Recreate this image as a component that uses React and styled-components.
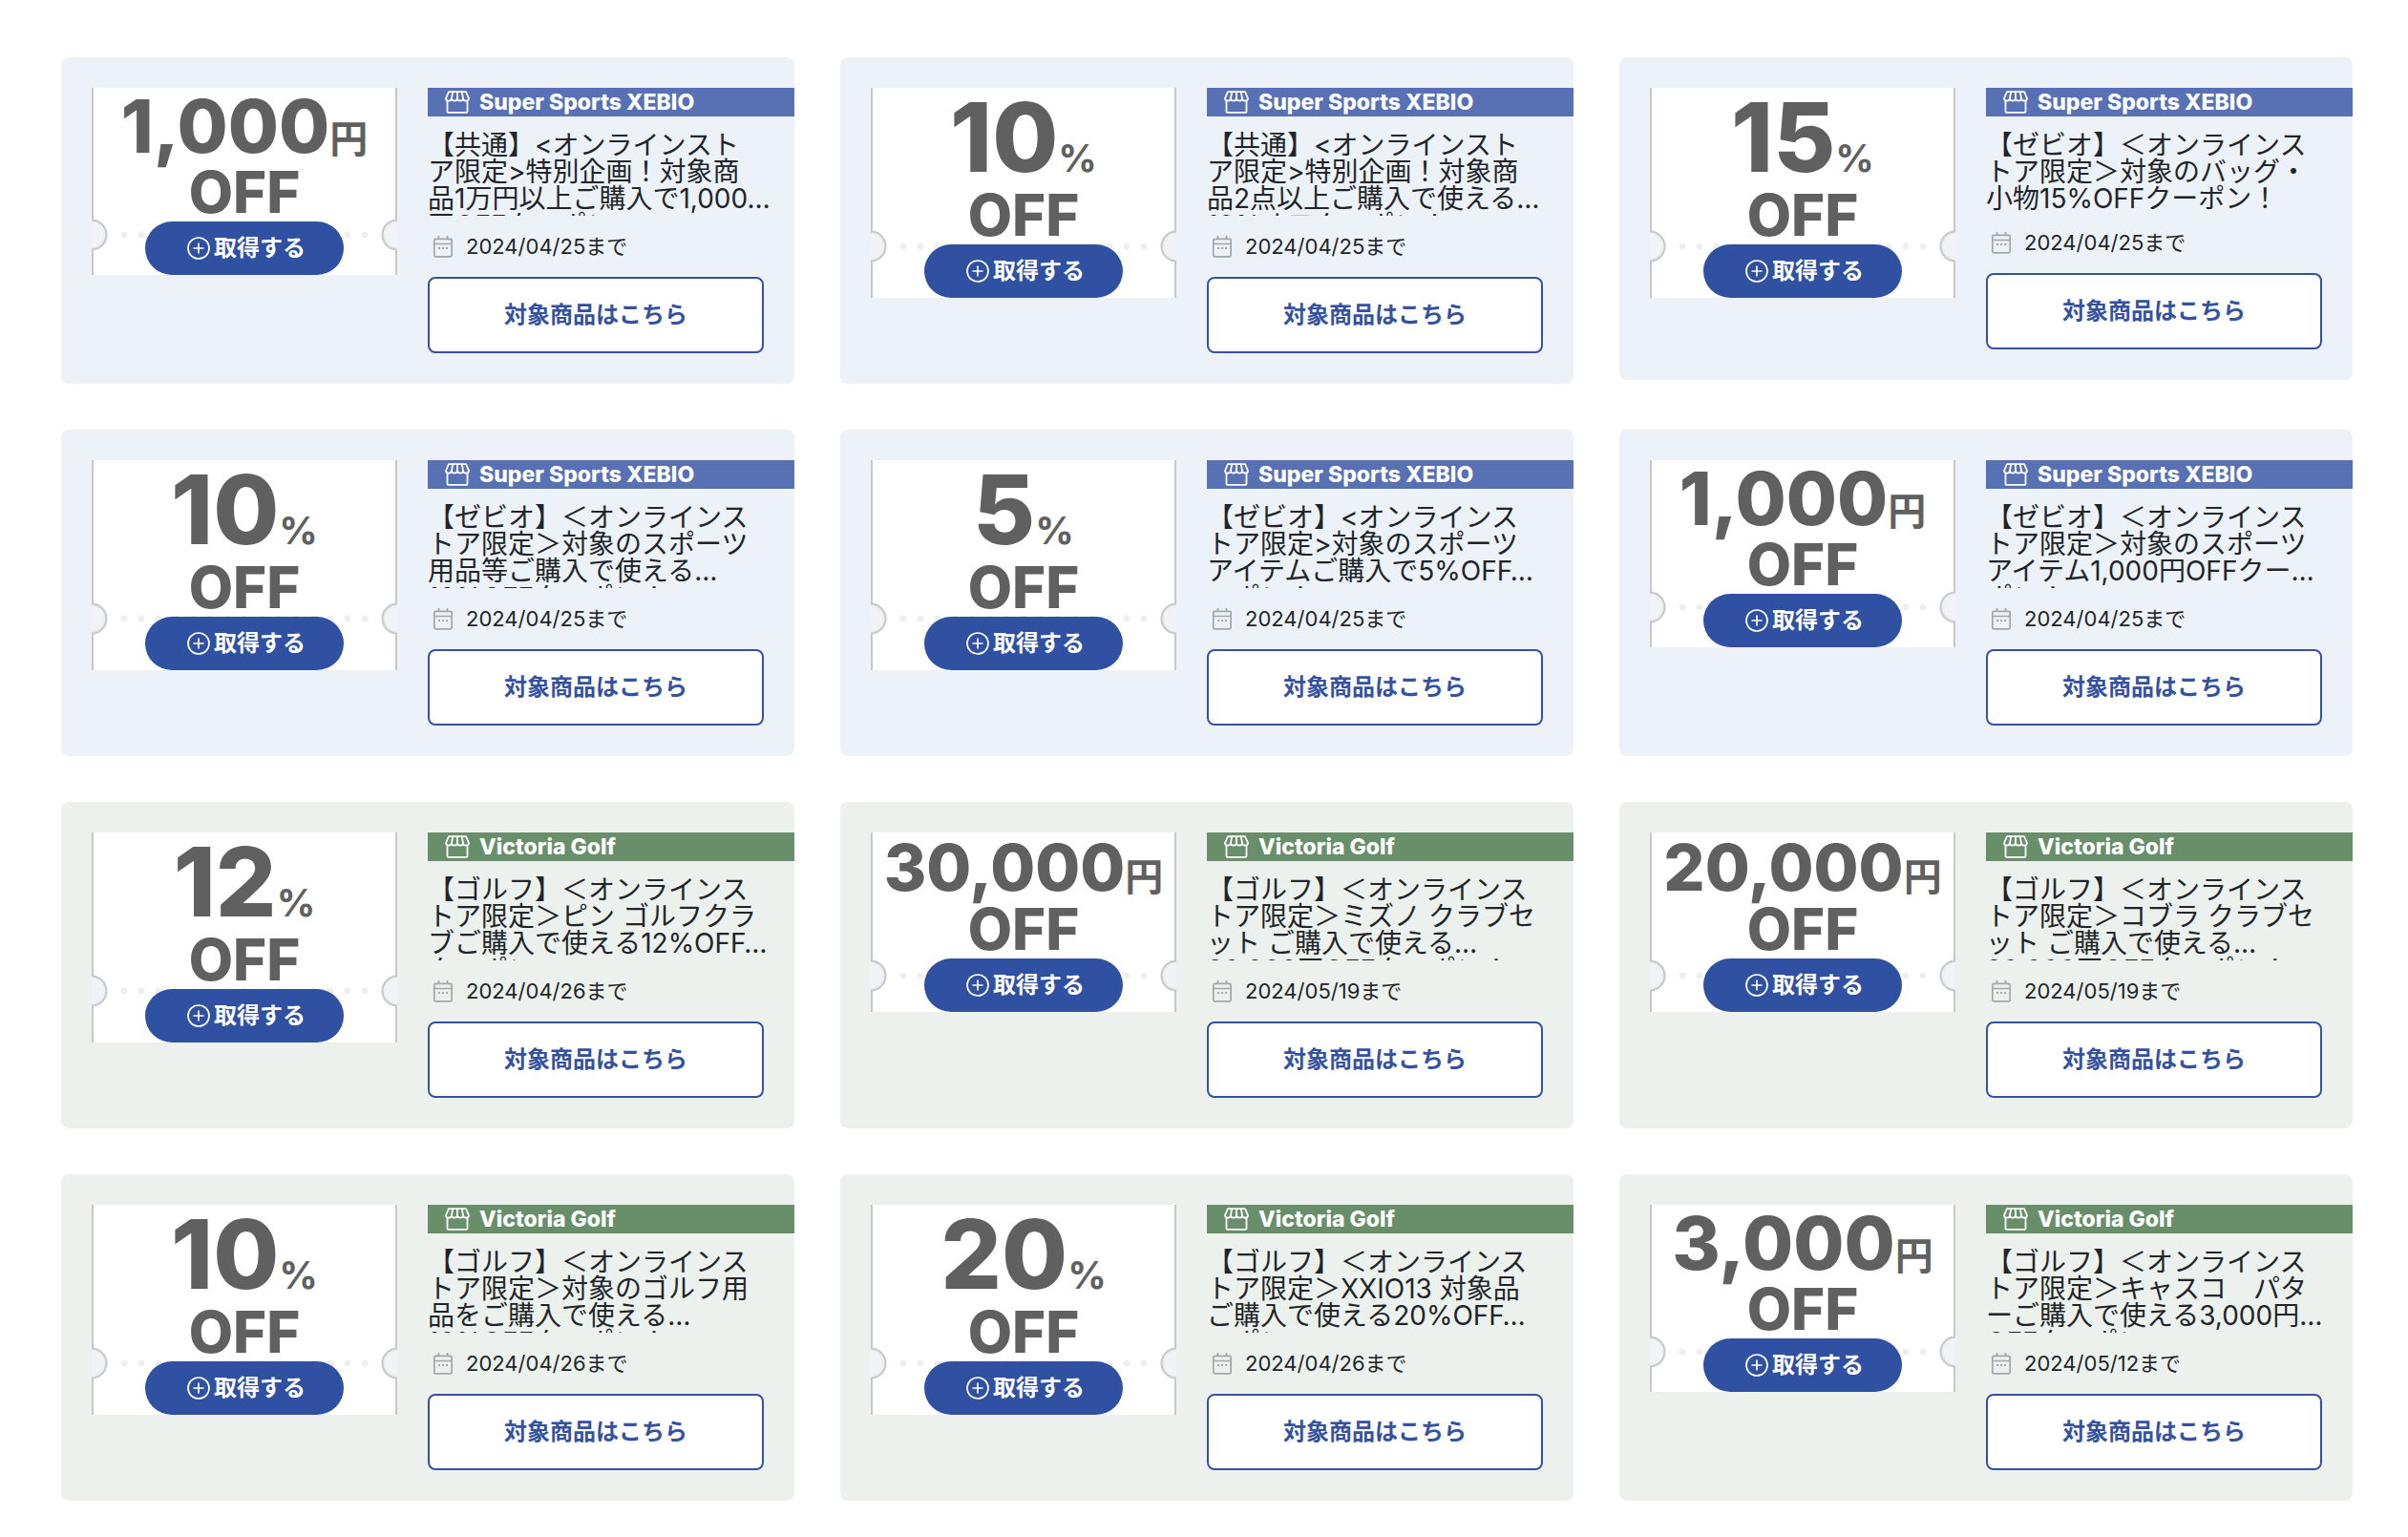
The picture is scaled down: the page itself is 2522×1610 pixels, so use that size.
import styled, { createGlobalStyle, ThemeProvider } from "styled-components";

const GlobalStyle = createGlobalStyle`
    *, *::before, *::after {
        box-sizing: border-box;
    }

    body {
        margin: 0;
        background: #fff;
        color: #212529;
        font-family: Inter, "Noto Sans CJK JP", sans-serif;
        line-height: 1;
    }
`;

const themes = {
    xebio: { shop: "Super Sports XEBIO", card: "#edf2f9", bar: "#5870b4" },
    golf: { shop: "Victoria Golf", card: "#ecf1ed", bar: "#688e6a" },
};

const CouponList = styled.ul`
    display: grid;
    grid-template-columns: repeat(3, minmax(0, 1fr));
    align-items: start;
    gap: 48px;
    margin: 0;
    padding: 60px 58px 40px 64px;
    list-style: none;
`;

const Card = styled.li`
    display: flex;
    align-items: flex-start;
    gap: 32px;
    padding: 32px 0 32px 32px;
    border-radius: 8px;
    background: ${({ theme }) => theme.card};
`;

// side lines, the two punched notches and the dotted tear line
const Ticket = styled.div`
    --tear: calc(50% + 56px);
    flex: none;
    display: flex;
    flex-direction: column;
    align-items: center;
    width: 320px;
    color: #606060;
    font-weight: 800;
    background:
        radial-gradient(circle at 0 var(--tear), #f1f3f6 12px, #e9ebee 14px, #c6c8ca 15px, #c6c8ca 16px, transparent 17px),
        radial-gradient(circle at 100% var(--tear), #f1f3f6 12px, #e9ebee 14px, #c6c8ca 15px, #c6c8ca 16px, transparent 17px),
        linear-gradient(#c6c8ca, #c6c8ca) left / 2px 100% no-repeat,
        linear-gradient(#c6c8ca, #c6c8ca) right / 2px 100% no-repeat,
        linear-gradient(#fff, #fff) left / 24px 100% no-repeat,
        linear-gradient(#fff, #fff) right / 24px 100% no-repeat,
        radial-gradient(circle, #efeff0 3px, transparent 4px) 50% var(--tear) / 18px 18px repeat-x,
        #fff;
`;

const numberSizes = {
    large: { font: 100, line: 104 },
    medium: { font: 77, line: 80 },
    small: { font: 68, line: 72 },
};

const Amount = styled.p`
    margin: 0;
    font-size: ${({ $size }) => numberSizes[$size].font}px;
    line-height: ${({ $size }) => numberSizes[$size].line}px;
    white-space: nowrap;
`;

const Unit = styled.span`
    font-size: 40px;
    font-weight: 700;
    line-height: 40px;
`;

const Off = styled.p`
    margin: 0;
    font-size: 60px;
    line-height: 58px;
    padding-bottom: 2px;
`;

const GetButton = styled.button`
    display: flex;
    align-items: center;
    justify-content: center;
    gap: 4px;
    width: 208px;
    height: 56px;
    padding: 0 0 0 4px;
    border: 0;
    border-radius: 28px;
    background: #3050a2;
    color: #fff;
    font: inherit;
    font-size: 24px;
    font-weight: 700;
    cursor: pointer;
`;

const Info = styled.div`
    flex: 1;
    min-width: 0;
`;

const ShopBar = styled.p`
    display: flex;
    align-items: center;
    gap: 10px;
    height: 30px;
    margin: 0 0 16px;
    padding: 0 0 1px 18px;
    background: ${({ theme }) => theme.bar};
    color: #fff;
    font-size: 23px;
    font-weight: 800;
    line-height: 22px;
    white-space: nowrap;
`;

const Details = styled.div`
    padding-right: 32px;
`;

// three lines, plus a sliver of the fourth when there is one
const Title = styled.h2`
    max-height: 88px;
    margin: 0 0 20px;
    overflow-x: visible;
    overflow-y: clip;
    font-size: 28px;
    font-weight: 400;
    line-height: 28px;
    white-space: pre;
`;

const Expiry = styled.p`
    display: flex;
    align-items: center;
    gap: 12px;
    height: 24px;
    margin: 0 0 20px;
    padding-left: 4px;
    font-size: 22px;
    white-space: nowrap;
`;

const ItemsLink = styled.a`
    display: flex;
    align-items: center;
    justify-content: center;
    height: 80px;
    border: 2px solid #3552a0;
    border-radius: 8px;
    background: #fff;
    color: #3552a0;
    font-size: 24px;
    font-weight: 700;
    text-decoration: none;
`;

const ShopIcon = () => (
    <svg width="26" height="24" viewBox="0 0 26 24" fill="none" stroke="#fff" strokeWidth="1.800" strokeLinejoin="round" strokeLinecap="round" aria-hidden="true">
        <path d="M4 1.200h18L25 8c0 3.400-5.600 3.400-5.900.4-.4 3-5.700 3-6.100 0-.4 3-5.700 3-6.100 0C6.600 11.400 1 11.400 1 8z" />
        <path d="M8.200 1.500 6.900 8.400M13 1.500v6.900M17.800 1.500l1.300 6.900M2.500 11v10.800c0 .6.400 1 1 1h19c.6 0 1-.4 1-1V11" />
    </svg>
);

const PlusIcon = () => (
    <svg width="24" height="24" viewBox="0 0 24 24" fill="none" stroke="#fff" strokeWidth="1.700" aria-hidden="true">
        <circle cx="12" cy="12" r="11" />
        <path d="M12 6.500v11M6.500 12h11" />
    </svg>
);

const CalendarIcon = () => (
    <svg width="24" height="24" viewBox="0 0 24 24" fill="none" stroke="#a3a6aa" strokeWidth="1.700" aria-hidden="true">
        <rect x="2.800" y="4.300" width="18.400" height="18.500" rx="1.500" />
        <path d="M3 9.500h18M7.500 1v4M16.500 1v4" />
        <path d="M7 14h2M11 14h2M15 14h2" strokeWidth="2" />
    </svg>
);

const coupons = [
    {
        brand: "xebio", amount: "1,000", unit: "円", size: "medium", until: "2024/04/25",
        title: "【共通】<オンラインスト\nア限定>特別企画！対象商\n品1万円以上ご購入で1,000…\n円OFFクーポン",
    },
    {
        brand: "xebio", amount: "10", unit: "%", size: "large", until: "2024/04/25",
        title: "【共通】<オンラインスト\nア限定>特別企画！対象商\n品2点以上ご購入で使える…\n10%オフクーポン！",
    },
    {
        brand: "xebio", amount: "15", unit: "%", size: "large", until: "2024/04/25",
        title: "【ゼビオ】＜オンラインス\nトア限定＞対象のバッグ・\n小物15%OFFクーポン！",
    },
    {
        brand: "xebio", amount: "10", unit: "%", size: "large", until: "2024/04/25",
        title: "【ゼビオ】＜オンラインス\nトア限定＞対象のスポーツ\n用品等ご購入で使える…\n10%OFFクーポン！",
    },
    {
        brand: "xebio", amount: "5", unit: "%", size: "large", until: "2024/04/25",
        title: "【ゼビオ】<オンラインス\nトア限定>対象のスポーツ\nアイテムご購入で5%OFF…\nーポン！",
    },
    {
        brand: "xebio", amount: "1,000", unit: "円", size: "medium", until: "2024/04/25",
        title: "【ゼビオ】＜オンラインス\nトア限定＞対象のスポーツ\nアイテム1,000円OFFクー…\nポン！",
    },
    {
        brand: "golf", amount: "12", unit: "%", size: "large", until: "2024/04/26",
        title: "【ゴルフ】＜オンラインス\nトア限定＞ピン ゴルフクラ\nブご購入で使える12%OFF…\nクーポン",
    },
    {
        brand: "golf", amount: "30,000", unit: "円", size: "small", until: "2024/05/19",
        title: "【ゴルフ】＜オンラインス\nトア限定＞ミズノ クラブセ\nット ご購入で使える…\n30,000円OFFクーポン！",
    },
    {
        brand: "golf", amount: "20,000", unit: "円", size: "small", until: "2024/05/19",
        title: "【ゴルフ】＜オンラインス\nトア限定＞コブラ クラブセ\nット ご購入で使える…\n20,000円OFFクーポン！",
    },
    {
        brand: "golf", amount: "10", unit: "%", size: "large", until: "2024/04/26",
        title: "【ゴルフ】＜オンラインス\nトア限定＞対象のゴルフ用\n品をご購入で使える…\n10%OFFクーポン！",
    },
    {
        brand: "golf", amount: "20", unit: "%", size: "large", until: "2024/04/26",
        title: "【ゴルフ】＜オンラインス\nトア限定＞XXIO13 対象品\nご購入で使える20%OFF…\nーポン",
    },
    {
        brand: "golf", amount: "3,000", unit: "円", size: "medium", until: "2024/05/12",
        title: "【ゴルフ】＜オンラインス\nトア限定＞キャスコ　パタ\nーご購入で使える3,000円…\nOFFクーポン",
    },
];

function Coupon({ coupon }) {
    return (
        <ThemeProvider theme={themes[coupon.brand]}>
            <Card>
                <Ticket>
                    <Amount $size={coupon.size}>
                        {coupon.amount}<Unit>{coupon.unit}</Unit>
                    </Amount>
                    <Off>OFF</Off>
                    <GetButton type="button">
                        <PlusIcon />
                        取得する
                    </GetButton>
                </Ticket>
                <Info>
                    <ShopBar>
                        <ShopIcon />
                        {themes[coupon.brand].shop}
                    </ShopBar>
                    <Details>
                        <Title>{coupon.title}</Title>
                        <Expiry>
                            <CalendarIcon />
                            {coupon.until}まで
                        </Expiry>
                        <ItemsLink href="#items">対象商品はこちら</ItemsLink>
                    </Details>
                </Info>
            </Card>
        </ThemeProvider>
    );
}

function App() {
    return (
        <>
            <GlobalStyle />
            <CouponList>
                {coupons.map((coupon, i) => (
                    <Coupon key={i} coupon={coupon} />
                ))}
            </CouponList>
        </>
    );
}

export default App;
